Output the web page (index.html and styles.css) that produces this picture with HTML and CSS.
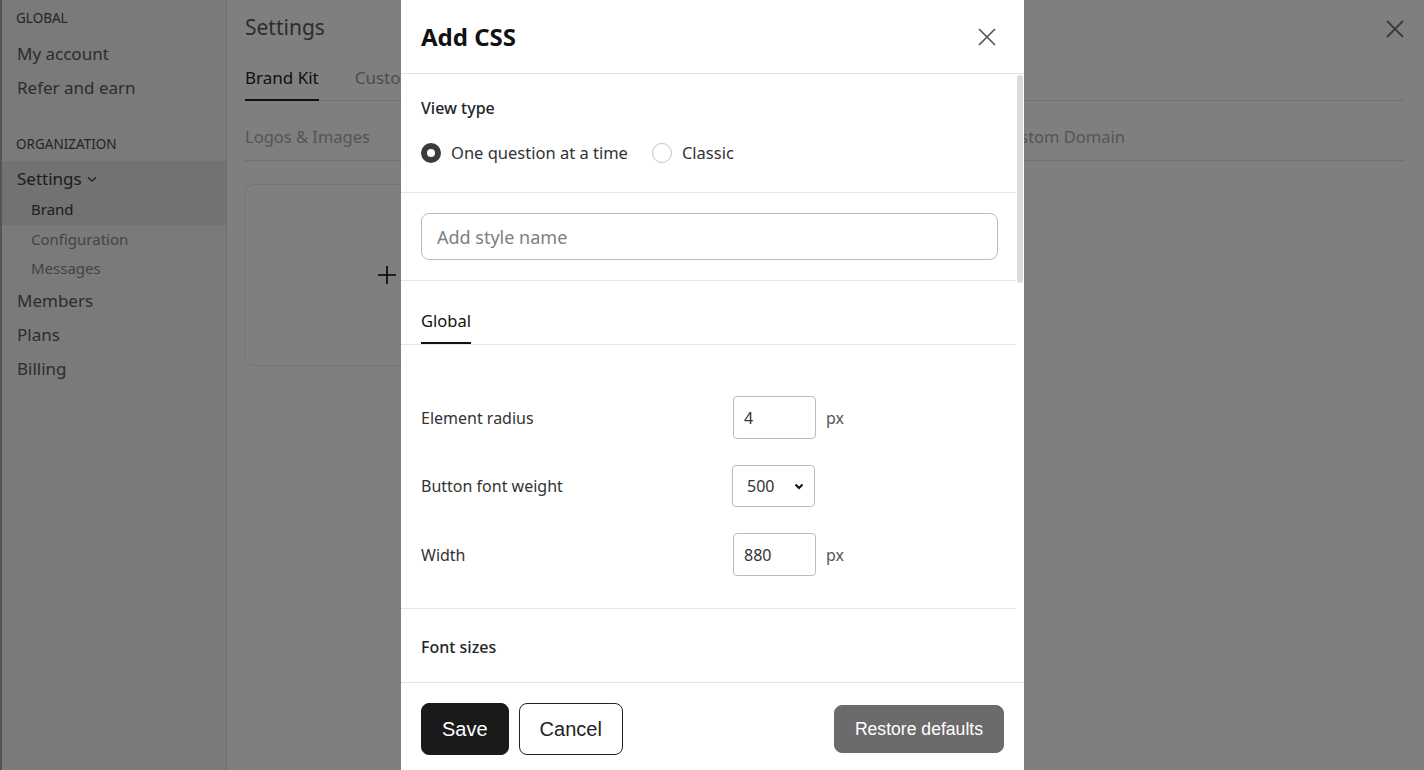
FILE: index.html
```html
<!DOCTYPE html>
<html>
<head>
  <title>Settings - Brand</title>
  <link rel="stylesheet" href="styles.css">
</head>
<body>
  <div class="app">
    <!-- left navigation -->
    <div class="sidebar">
      <div class="nav-label">GLOBAL</div>
      <a class="nav-item" href="#">My account</a>
      <a class="nav-item" href="#">Refer and earn</a>

      <div class="nav-label nav-label-org">ORGANIZATION</div>
      <a class="nav-item active" href="#">Settings
        <svg class="chev" width="12" height="12" viewBox="0 0 12 12"><path d="M2 4.2 6 8.2l4-4" fill="none" stroke="currentColor" stroke-width="1.3"/></svg>
      </a>
      <a class="nav-sub active" href="#">Brand</a>
      <a class="nav-sub" href="#">Configuration</a>
      <a class="nav-sub" href="#">Messages</a>
      <a class="nav-item" href="#">Members</a>
      <a class="nav-item" href="#">Plans</a>
      <a class="nav-item" href="#">Billing</a>
    </div>

    <div class="main">
      <h1 class="page-title">Settings</h1>
      <div class="tabs">
        <span class="tab current">Brand Kit</span>
        <span class="tab">Custom CSS</span>
      </div>
      <div class="subtabs">
        <span class="subtab">Logos &amp; Images</span>
        <span class="subtab">Colors</span>
        <span class="subtab">Fonts</span>
        <span class="subtab">Buttons</span>
        <span class="subtab">Custom Domain</span>
      </div>
      <div class="upload-card">
        <svg width="20" height="20" viewBox="0 0 20 20"><path d="M10 1v18M1 10h18" stroke="#000" stroke-width="1.6"/></svg>
      </div>
    </div>
  </div>

  <div class="overlay">
    <button class="page-close" aria-label="Close">
      <svg width="20" height="20" viewBox="0 0 20 20"><path d="M2 2l16 16M18 2 2 18" stroke="currentColor" stroke-width="1.8"/></svg>
    </button>
  </div>

  <!-- Add CSS dialog -->
  <div class="modal">
    <div class="modal-header">
      <h2 class="modal-title">Add CSS</h2>
      <button class="modal-close" aria-label="Close">
        <svg width="18" height="18" viewBox="0 0 18 18"><path d="M1 1l16 16M17 1 1 17" stroke="currentColor" stroke-width="1.7"/></svg>
      </button>
    </div>

    <div class="modal-body">
      <div class="body-content">
        <div class="section view-type">
          <div class="section-label">View type</div>
          <div class="radio-row">
            <label class="radio"><input type="radio" name="view" checked> One question at a time</label>
            <label class="radio"><input type="radio" name="view"> Classic</label>
          </div>
        </div>

        <div class="section name-section">
          <input class="name-input" type="text" placeholder="Add style name">
        </div>

        <div class="inner-tabs">
          <span class="inner-tab current">Global</span>
        </div>

        <div class="section fields">
          <div class="field-row">
            <label>Element radius</label>
            <div class="field-control"><input class="small-input" type="text" value="4"><span class="unit">px</span></div>
          </div>
          <div class="field-row">
            <label>Button font weight</label>
            <div class="field-control">
              <span class="select-wrap">
                <select class="small-select">
                  <option>400</option>
                  <option selected>500</option>
                  <option>600</option>
                  <option>700</option>
                </select>
                <svg class="select-arrow" width="12" height="12" viewBox="0 0 12 12"><path d="M2.5 4.5 6 8l3.5-3.5" fill="none" stroke="#111" stroke-width="2"/></svg>
              </span>
            </div>
          </div>
          <div class="field-row">
            <label>Width</label>
            <div class="field-control"><input class="small-input" type="text" value="880"><span class="unit">px</span></div>
          </div>
        </div>

        <div class="section fields fonts">
          <div class="section-label">Font sizes</div>
          <div class="field-row">
            <label>Title</label>
            <div class="field-control"><input class="small-input" type="text" value="28"><span class="unit">px</span></div>
          </div>
          <div class="field-row">
            <label>Question</label>
            <div class="field-control"><input class="small-input" type="text" value="20"><span class="unit">px</span></div>
          </div>
          <div class="field-row">
            <label>Answer</label>
            <div class="field-control"><input class="small-input" type="text" value="16"><span class="unit">px</span></div>
          </div>
          <div class="field-row">
            <label>Button</label>
            <div class="field-control"><input class="small-input" type="text" value="16"><span class="unit">px</span></div>
          </div>
        </div>
      </div>
      <!-- scroll position indicator -->
      <div class="scroll-track"><div class="scroll-thumb"></div></div>
    </div>

    <div class="modal-footer">
      <button class="btn btn-save">Save</button>
      <button class="btn btn-cancel">Cancel</button>
      <button class="btn btn-restore">Restore defaults</button>
    </div>
  </div>
</body>
</html>
```

FILE: styles.css
```css
html, body {
  margin: 0;
  height: 100%;
  overflow: hidden;
}
body {
  font-family: "Noto Sans", "Open Sans", sans-serif;
  color: #212529;
  background: #fff;
}
a {
  text-decoration: none;
}

.app {
  display: flex;
  height: 100vh;
}

/* sidebar */
.sidebar {
  width: 224px;
  flex-shrink: 0;
  background: #f4f4f4;
  border-left: 2px solid #aaa;
  border-right: 1px solid #dcdcdc;
  padding-top: 8px;
  display: flex;
  flex-direction: column;
}
.nav-label {
  padding-left: 14px;
  font-size: 13.5px;
  line-height: 20px;
  color: #4a4a4a;
  margin-bottom: 8px;
}
.nav-label-org {
  margin-top: 30px;
  margin-bottom: 7px;
}
.nav-item {
  display: flex;
  align-items: center;
  gap: 4px;
  padding-left: 15px;
  height: 34px;
  flex-shrink: 0;
  font-size: 17px;
  color: #5a5a5a;
}
.nav-sub {
  display: block;
  padding-left: 29px;
  height: 29.5px;
  line-height: 29.5px;
  flex-shrink: 0;
  font-size: 15px;
  color: #888;
}
.nav-item.active, .nav-sub.active {
  background: #e4e4e4;
  color: #3a3a3a;
}
.chev {
  margin-top: 2px;
}

/* page content */
.main {
  flex: 1;
  padding: 12px 20px 0 18px;
}
.page-title {
  margin: 0;
  font-size: 21px;
  font-weight: 400;
  line-height: 30px;
  color: #5a5a5a;
}
.tabs {
  display: flex;
  gap: 36px;
  margin-top: 24px;
  border-bottom: 1px solid #e0e0e0;
}
.tab {
  font-size: 17px;
  line-height: 24px;
  padding: 0 0 9px;
  color: #999;
  border-bottom: 2px solid transparent;
  margin-bottom: -1px;
}
.tab.current {
  color: #222;
  border-bottom-color: #222;
}
.subtabs {
  display: flex;
  justify-content: space-between;
  padding-right: 279px;
  margin-top: 24px;
  border-bottom: 1px solid #e0e0e0;
}
.subtab {
  font-size: 16.5px;
  line-height: 24px;
  padding-bottom: 11px;
  color: #aaa;
}
.upload-card {
  margin-top: 23px;
  margin-left: -1px;
  width: 284px;
  height: 180px;
  border: 1px solid #e8e8e8;
  border-radius: 10px;
  display: flex;
  align-items: center;
  justify-content: center;
}

.overlay {
  position: fixed;
  inset: 0;
  background: rgba(0, 0, 0, 0.5);
}
.page-close {
  position: absolute;
  top: 19px;
  right: 19px;
  background: none;
  border: 0;
  padding: 0;
  color: #3a3a3a;
}

/* dialog */
.modal {
  position: fixed;
  top: 0;
  left: 401px;
  width: 623px;
  background: #fff;
  display: flex;
  flex-direction: column;
}
.modal-header {
  height: 73px;
  padding: 0 28px 0 20px;
  display: flex;
  align-items: center;
  justify-content: space-between;
  border-bottom: 1px solid #e2e2e2;
}
.modal-title {
  margin: 0;
  font-size: 24px;
  font-weight: 700;
  color: #111;
}
.modal-close {
  background: none;
  border: 0;
  padding: 0;
  color: #555;
  display: flex;
}

.modal-body {
  height: 608px;
  overflow: hidden;
  display: flex;
}
.body-content {
  flex: 1;
  min-width: 0;
}
.scroll-track {
  width: 8px;
  flex-shrink: 0;
  padding-top: 1px;
}
.scroll-thumb {
  width: 6px;
  height: 208px;
  margin-left: 1px;
  border-radius: 3px;
  background: #dcdcdc;
}

.section {
  padding: 20px;
  border-bottom: 1px solid #e5e5e5;
}
.section-label {
  font-size: 16px;
  font-weight: 500;
  line-height: 24px;
  color: #212529;
}
.view-type {
  padding-top: 22px;
  padding-bottom: 27px;
}
.radio-row {
  display: flex;
  gap: 24px;
  margin-top: 21px;
}
.radio {
  display: flex;
  align-items: center;
  gap: 10px;
  font-size: 16.5px;
  line-height: 24px;
  color: #333;
}
.radio input {
  appearance: none;
  margin: 0;
  width: 20px;
  height: 20px;
  border-radius: 50%;
  border: 1px solid #c4c4c4;
  background: #fff;
}
.radio input:checked {
  border: 6.5px solid #3b3b3b;
  background: #fff;
}

.name-input {
  display: block;
  box-sizing: border-box;
  width: 577px;
  height: 47px;
  border: 1px solid #bdbdbd;
  border-radius: 8px;
  padding: 0 15px;
  font-family: inherit;
  font-size: 18px;
  color: #333;
}
.name-input::placeholder {
  color: #7a7f85;
}

.inner-tabs {
  padding: 0 20px;
  border-bottom: 1px solid #e5e5e5;
  display: flex;
}
.inner-tab {
  font-size: 16.5px;
  line-height: 24px;
  padding: 28px 0 9px;
  color: #111;
  border-bottom: 2px solid #111;
}

.fields {
  padding-top: 51px;
  padding-bottom: 32px;
  display: flex;
  flex-direction: column;
  gap: 26px;
}
.fonts {
  padding-top: 26px;
}
.field-row {
  display: grid;
  grid-template-columns: 312px auto;
  align-items: center;
}
.field-row label {
  font-size: 16px;
  color: #333;
}
.field-control {
  display: flex;
  align-items: center;
  gap: 10px;
}
.small-input {
  box-sizing: border-box;
  width: 83px;
  height: 43px;
  border: 1px solid #bdbdbd;
  border-radius: 4px;
  padding: 0 10px;
  font-family: inherit;
  font-size: 16px;
  color: #333;
}
.unit {
  font-size: 16px;
  color: #555;
}
.select-wrap {
  position: relative;
  display: inline-flex;
  margin-left: -1px;
}
.small-select {
  appearance: none;
  box-sizing: border-box;
  width: 83px;
  height: 42px;
  border: 1px solid #bdbdbd;
  border-radius: 4px;
  padding: 0 14px;
  background: #fff;
  font-family: inherit;
  font-size: 16px;
  color: #333;
}
.select-arrow {
  position: absolute;
  right: 10px;
  top: 15px;
  pointer-events: none;
}

.modal-footer {
  border-top: 1px solid #e2e2e2;
  padding: 20px;
  display: flex;
  align-items: center;
  gap: 10px;
}
.btn {
  font-family: "Liberation Sans", Arial, sans-serif;
  border-radius: 8px;
  padding: 0 20px;
  cursor: pointer;
}
.btn-save {
  height: 52px;
  font-size: 20px;
  background: #1a1a1a;
  color: #fff;
  border: 1px solid #1a1a1a;
}
.btn-cancel {
  height: 52px;
  font-size: 20px;
  background: #fff;
  color: #222;
  border: 1px solid #222;
}
.btn-restore {
  margin-left: auto;
  height: 48px;
  font-size: 17.6px;
  background: #6b6b6b;
  color: #fff;
  border: 1px solid #6b6b6b;
}
```
